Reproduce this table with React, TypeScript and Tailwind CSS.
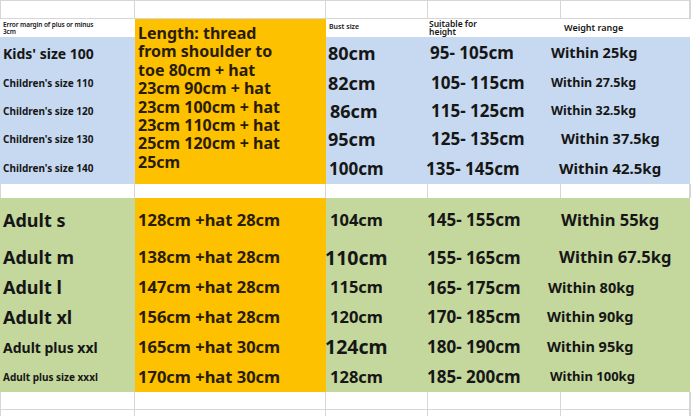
const line = 'border-[#d6d6d6]';

const kids = [
  { label: "Kids' size 100", ls: 'text-[14px]', bust: '80cm', bs: 'text-[18px] pl-[2px]', h: '95- 105cm', hx: 'pl-[2px]', w: 'Within 25kg', ws: 'text-[14.5px] -ml-[10px]', row: 'row-start-3' },
  { label: "Children's size 110", ls: 'text-[10px]', bust: '82cm', bs: 'text-[18px] pl-[2px]', h: '105- 115cm', hx: 'pl-[3px]', w: 'Within 27.5kg', ws: 'text-[12.5px] -ml-[10px]', row: 'row-start-4' },
  { label: "Children's size 120", ls: 'text-[10px]', bust: '86cm', bs: 'text-[18px] pl-[4px]', h: '115- 125cm', hx: 'pl-[3px]', w: 'Within 32.5kg', ws: 'text-[12.5px] -ml-[10px]', row: 'row-start-5' },
  { label: "Children's size 130", ls: 'text-[10px]', bust: '95cm', bs: 'text-[18px] pl-[2px]', h: '125- 135cm', hx: 'pl-[3px]', w: 'Within 37.5kg', ws: 'text-[14.5px] ml-0', row: 'row-start-6' },
  { label: "Children's size 140", ls: 'text-[10px]', bust: '100cm', bs: 'text-[17px] pl-[3px]', h: '135- 145cm', hx: '-ml-[2px]', w: 'Within 42.5kg', ws: 'text-[15px] -ml-[2px]', row: 'row-start-7' },
];

const adults = [
  { label: 'Adult s', ls: 'text-[18px]', len: '128cm +hat 28cm', bust: '104cm', bs: 'text-[16.5px] pl-[4px]', h: '145- 155cm', w: 'Within 55kg', ws: 'text-[16.5px] ml-0', row: 'row-start-9' },
  { label: 'Adult m', ls: 'text-[18px]', len: '138cm +hat 28cm', bust: '110cm', bs: 'text-[19.5px] -ml-[1px]', h: '155- 165cm', w: 'Within 67.5kg', ws: 'text-[16.5px] -ml-[2px]', row: 'row-start-10' },
  { label: 'Adult l', ls: 'text-[18px]', len: '147cm +hat 28cm', bust: '115cm', bs: 'text-[16.5px] pl-[4px]', h: '165- 175cm', w: 'Within 80kg', ws: 'text-[14.5px] -ml-[13px]', row: 'row-start-11' },
  { label: 'Adult xl', ls: 'text-[18px]', len: '156cm +hat 28cm', bust: '120cm', bs: 'text-[16.5px] pl-[4px]', h: '170- 185cm', w: 'Within 90kg', ws: 'text-[14.5px] -ml-[14px]', row: 'row-start-12' },
  { label: 'Adult plus xxl', ls: 'text-[14px]', len: '165cm +hat 30cm', bust: '124cm', bs: 'text-[19.5px] -ml-[1px]', h: '180- 190cm', w: 'Within 95kg', ws: 'text-[14.5px] -ml-[14px]', row: 'row-start-13' },
  { label: 'Adult plus size xxxl', ls: 'text-[10px]', len: '170cm +hat 30cm', bust: '128cm', bs: 'text-[16.5px] pl-[4px]', h: '185- 200cm', w: 'Within 100kg', ws: 'text-[13px] -ml-[11px]', row: 'row-start-14' },
];

const lengthLines = [
  'Length: thread',
  'from shoulder to',
  'toe 80cm + hat',
  '23cm 90cm + hat',
  '23cm 100cm + hat',
  '23cm 110cm + hat',
  '25cm 120cm + hat',
  '25cm',
];

function GridLineRow({ row, bottom, top }: { row: string; bottom?: boolean; top?: boolean }) {
  const cols = ['col-start-1 border-l', 'col-start-2', 'col-start-3', 'col-start-4', 'col-start-5', 'col-start-6'];
  return (
    <>
      {cols.map((c) => (
        <div key={c} className={`${row} ${c} border-r ${bottom ? 'border-b' : ''} ${top ? 'border-t' : ''} ${line} bg-white`} />
      ))}
    </>
  );
}

export default function App() {
  return (
    <div
      className="w-[691px] h-[416px] overflow-hidden bg-white text-[#161616] font-bold"
      style={{ fontFamily: '"Noto Sans", "Open Sans", sans-serif' }}
    >
      <div className="grid h-full grid-cols-[135px_191px_102px_133px_129px_1fr] grid-rows-[19px_18px_32px_28px_28px_28px_31px_14px_44px_31px_29px_30px_30px_30px_18px_6px]">
        <GridLineRow row="row-start-1" top bottom />

        {/* header row */}
        <div className="row-start-2 col-start-1 flex flex-col justify-center pl-[3px] text-[6.5px] leading-[7.5px] font-semibold tracking-[-0.1px]">
          <span>Error margin of plus or minus</span>
          <span>3cm</span>
        </div>
        <div className="row-start-2 col-start-3 flex items-center pl-[3px] pb-[2px] text-[7px] font-semibold">Bust size</div>
        <div className="row-start-2 col-start-4 flex flex-col justify-center pl-[1px] text-[8.5px] leading-[8.5px] font-semibold">
          <span>Suitable for</span>
          <span>height</span>
        </div>
        <div className="row-start-2 col-start-5 flex items-center pl-[3px] text-[9px] font-semibold">Weight range</div>

        {/* kids block */}
        <div className="row-start-2 row-span-6 col-start-2 bg-[#fdc100] pl-[3px] pt-[5px] flex flex-col text-[16px] leading-[18.4px] text-[#2a1c00] whitespace-nowrap">
          {lengthLines.map((t) => (
            <span key={t}>{t}</span>
          ))}
        </div>
        {kids.map((k) => (
          <div key={k.label} className="contents">
            <div className={`${k.row} col-start-1 bg-[#c6d9f0] flex items-center pl-[3px] whitespace-nowrap ${k.ls}`}>{k.label}</div>
            <div className={`${k.row} col-start-3 bg-[#c6d9f0] flex items-center whitespace-nowrap`}>
              <span className={k.bs}>{k.bust}</span>
            </div>
            <div className={`${k.row} col-start-4 bg-[#c6d9f0] flex items-center whitespace-nowrap text-[17px]`}>
              <span className={k.hx}>{k.h}</span>
            </div>
            <div className={`${k.row} col-start-5 bg-[#c6d9f0] flex items-center whitespace-nowrap`}>
              <span className={k.ws}>{k.w}</span>
            </div>
          </div>
        ))}

        <GridLineRow row="row-start-8" />

        {/* adult block */}
        <div className="row-start-9 row-span-6 col-start-2 bg-[#fdc100]" />
        {adults.map((a) => (
          <div key={a.label} className="contents">
            <div className={`${a.row} col-start-1 bg-[#c4d79c] flex items-center pl-[3px] whitespace-nowrap ${a.ls}`}>{a.label}</div>
            <div className={`${a.row} col-start-2 flex items-center pl-[3px] whitespace-nowrap text-[16.5px] text-[#2a1c00]`}>{a.len}</div>
            <div className={`${a.row} col-start-3 bg-[#c4d79c] flex items-center whitespace-nowrap`}>
              <span className={a.bs}>{a.bust}</span>
            </div>
            <div className={`${a.row} col-start-4 bg-[#c4d79c] flex items-center whitespace-nowrap text-[17px]`}>
              <span className="-ml-[1px]">{a.h}</span>
            </div>
            <div className={`${a.row} col-start-5 bg-[#c4d79c] flex items-center whitespace-nowrap`}>
              <span className={a.ws}>{a.w}</span>
            </div>
          </div>
        ))}

        <GridLineRow row="row-start-15" bottom />
        <GridLineRow row="row-start-16" />
      </div>
    </div>
  );
}
